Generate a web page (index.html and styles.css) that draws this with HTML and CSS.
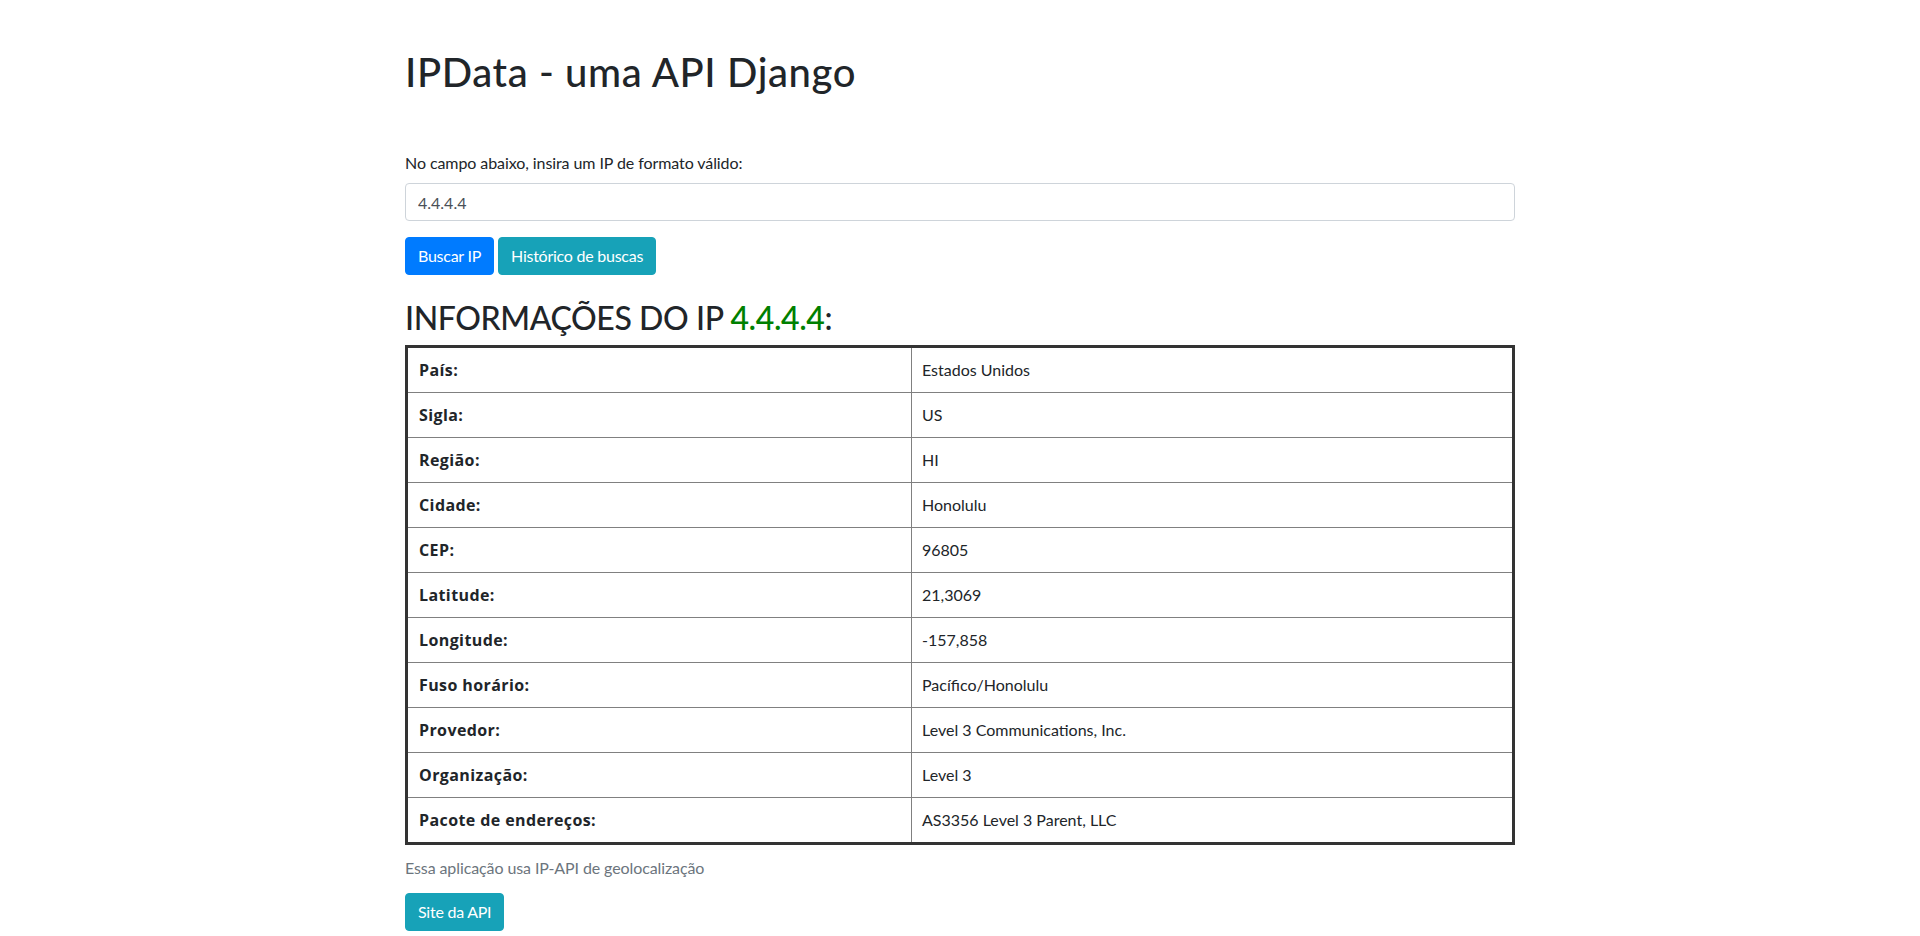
FILE: index.html
```html
<!DOCTYPE html>
<html lang="pt-br">
<head>
<meta charset="utf-8">
<title>IPData - uma API Django</title>
<link rel="stylesheet" href="styles.css">
</head>
<body>
<div class="container">
  <h1 class="title">IPData - uma API Django</h1>
  <form class="search-form">
    <label class="field-label" for="ip">No campo abaixo, insira um IP de formato válido:</label>
    <input class="field-input" id="ip" type="text" value="4.4.4.4">
    <div class="actions">
      <button type="button" class="btn btn-primary">Buscar IP</button>
      <button type="button" class="btn btn-info">Histórico de buscas</button>
    </div>
  </form>
  <h2 class="result-title">INFORMAÇÕES DO IP <span class="ip">4.4.4.4</span>:</h2>
  <table class="info-table">
    <tbody>
      <tr><td class="key">País:</td><td class="val">Estados Unidos</td></tr>
      <tr><td class="key">Sigla:</td><td class="val">US</td></tr>
      <tr><td class="key">Região:</td><td class="val">HI</td></tr>
      <tr><td class="key">Cidade:</td><td class="val">Honolulu</td></tr>
      <tr><td class="key">CEP:</td><td class="val">96805</td></tr>
      <tr><td class="key">Latitude:</td><td class="val">21,3069</td></tr>
      <tr><td class="key">Longitude:</td><td class="val">-157,858</td></tr>
      <tr><td class="key">Fuso horário:</td><td class="val">Pacífico/Honolulu</td></tr>
      <tr><td class="key">Provedor:</td><td class="val">Level 3 Communications, Inc.</td></tr>
      <tr><td class="key">Organização:</td><td class="val">Level 3</td></tr>
      <tr class="last"><td class="key">Pacote de endereços:</td><td class="val">AS3356 Level 3 Parent, LLC</td></tr>
    </tbody>
  </table>
  <p class="note">Essa aplicação usa IP-API de geolocalização</p>
  <a class="btn btn-info" href="#">Site da API</a>
</div>
</body>
</html>
```

FILE: styles.css
```css
* { box-sizing: border-box; }

html, body {
  margin: 0;
  padding: 0;
  background: #fff;
}

body {
  font-family: "Segoe UI", Lato, "Open Sans", sans-serif;
  font-size: 16px;
  line-height: 1.5;
  color: #212529;
}

.container {
  width: 1140px;
  margin: 0 auto;
  padding: 48px 15px 0;
}

.title {
  margin: 0 0 55px;
  font-size: 40px;
  font-weight: 500;
  line-height: 1.2;
  letter-spacing: 0.6px;
}

.search-form {
  margin: 0;
}

.field-label {
  display: block;
  margin-bottom: 8px;
  letter-spacing: -0.08px;
}

.field-input {
  display: block;
  width: 100%;
  height: 38px;
  padding: 6px 12px;
  font: inherit;
  color: #495057;
  background: #fff;
  border: 1px solid #ced4da;
  border-radius: 4px;
  margin-bottom: 16px;
}

.actions {
  display: flex;
  gap: 4px;
}

.btn {
  display: inline-block;
  height: 38px;
  padding: 6px 12px;
  font: inherit;
  line-height: 24px;
  letter-spacing: -0.25px;
  color: #fff;
  border: 1px solid transparent;
  border-radius: 4px;
  text-decoration: none;
  cursor: pointer;
}

.btn-primary {
  background: #007bff;
  border-color: #007bff;
}

.btn-info {
  background: #17a2b8;
  border-color: #17a2b8;
}

.result-title {
  margin: 24px 0 8px;
  font-size: 32px;
  font-weight: 500;
  line-height: 1.2;
  letter-spacing: -0.4px;
}

.ip {
  color: #008000;
}

.info-table {
  width: 100%;
  border-collapse: separate;
  border-spacing: 0;
  border: 3px solid #333;
  margin-bottom: 11px;
}

.info-table td {
  padding: 10px 12px;
  line-height: 24px;
  border-bottom: 1px solid #808080;
  vertical-align: top;
}

.info-table tr.last td {
  border-bottom: none;
}

.info-table .key {
  width: 504px;
  padding-left: 11px;
  font-family: "Open Sans", sans-serif;
  font-size: 16px;
  font-weight: 700;
  letter-spacing: 0.4px;
  border-right: 1px solid #808080;
}

.info-table .val {
  padding-left: 10px;
}

.note {
  margin: 0 0 13px;
  color: #6c757d;
  letter-spacing: -0.1px;
}
```
